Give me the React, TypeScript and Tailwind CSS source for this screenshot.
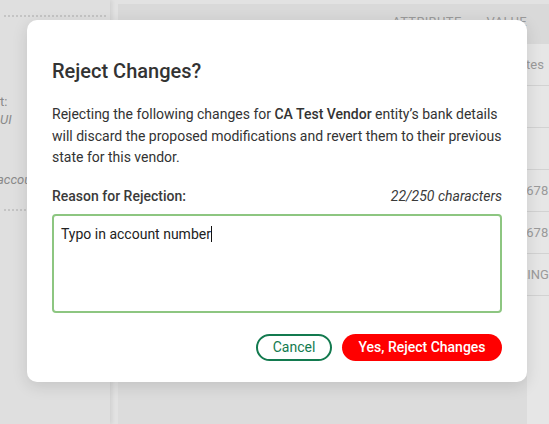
import React from "react";

const rows = [
  { value: "ates" },
  { value: "" },
  { value: "" },
  { value: "5678" },
  { value: "5678" },
  { value: "KING" },
];

function Background() {
  return (
    <div className="flex h-[424px] w-[549px] overflow-hidden bg-[#e2e2e2]">
      {/* sidebar */}
      <div className="relative flex w-[110px] shrink-0 flex-col bg-[#dfdfdf] text-[13px] text-[#8a8a8a] shadow-[2px_0_4px_rgba(0,0,0,0.08)]">
        <div className="mx-[4px] mt-[15px] border-t-2 border-dotted border-[#c4c4c4]" />
        <div className="mt-[76px] leading-[18px]">t:</div>
        <div className="italic leading-[18px]">UI</div>
        <div className="mt-[42px] -ml-[3px] italic leading-[18px]">accou</div>
        <div className="mx-[4px] mt-[20px] border-t-2 border-dotted border-[#c4c4c4]" />
      </div>
      {/* main */}
      <div className="flex flex-1 flex-col pl-[8px] pt-[4px]">
        <div className="flex h-[40px] items-start justify-end gap-[25px] bg-[#d9d9d9] pr-[22px] pt-[8px] text-[13px] tracking-wide text-[#9a9a9a]">
          <span>ATTRIBUTE</span>
          <span>VALUE</span>
        </div>
        <div className="flex flex-1">
          <div className="flex-1 bg-[#dcdcdc]" />
          <div className="flex w-[22px] flex-col bg-[#e6e6e6] text-[13px] text-[#9a9a9a]">
            {rows.map((r, i) => (
              <div key={i} className="flex h-[42px] items-center overflow-hidden whitespace-nowrap border-b border-[#d2d2d2]">
                <span className="-ml-[8px]">{r.value}</span>
              </div>
            ))}
          </div>
        </div>
      </div>
    </div>
  );
}

export default function App() {
  return (
    <div className="relative h-[424px] w-[549px] overflow-hidden" style={{ fontFamily: "Roboto, 'Liberation Sans', sans-serif" }}>
      <Background />
      <div className="absolute left-[27px] top-[20px] flex h-[362px] w-[500px] flex-col rounded-[10px] bg-white px-[25px] pt-[37px] shadow-[0_4px_16px_rgba(0,0,0,0.12)]">
        <h2 className="text-[20px] font-medium leading-[28px] text-[#333333]">Reject Changes?</h2>
        <p className="mt-[19px] text-[14px] leading-[21.5px] text-[#333333]">
          Rejecting the following changes for <span className="font-medium">CA Test Vendor</span> entity’s bank details will discard the proposed modifications and revert them to their previous state for this vendor.
        </p>
        <div className="mt-[17px] flex items-center justify-between text-[14px] leading-[20px] text-[#3a3a3a]">
          <span className="font-medium">Reason for Rejection:</span>
          <span className="italic">22/250 characters</span>
        </div>
        <div className="mt-[8px] h-[99px] rounded-[4px] border-2 border-[#8dc681] px-[7px] pt-[7px] text-[14px] leading-[20px] text-[#222222]">
          Typo in account number<span className="ml-[0.5px] inline-block h-[16px] w-px translate-y-[3px] bg-[#111111]" />
        </div>
        <div className="mt-[21px] flex justify-end gap-[10px]">
          <button className="h-[27px] w-[76px] rounded-full border-2 border-[#137a4f] text-[14px] text-[#137a4f]">Cancel</button>
          <button className="h-[27px] w-[160px] rounded-full bg-[#ff0000] text-[14px] font-medium text-white">Yes, Reject Changes</button>
        </div>
      </div>
    </div>
  );
}
